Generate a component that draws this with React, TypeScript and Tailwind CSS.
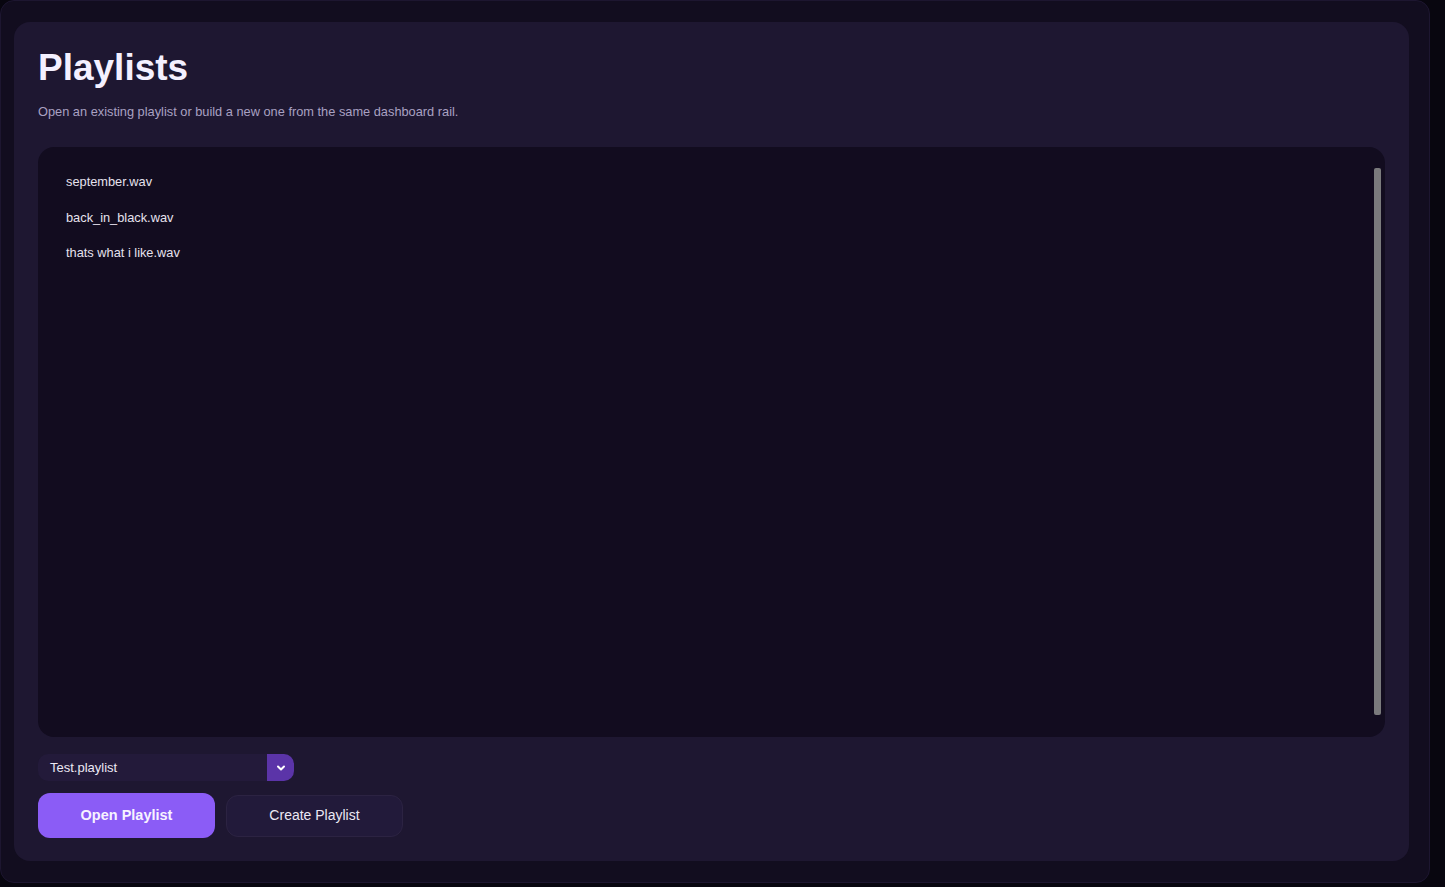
import React from "react";

export default function App() {
  const items = ["september.wav", "back_in_black.wav", "thats what i like.wav"];
  return (
    <div
      className="w-[1445px] h-[887px] bg-[#08060f] overflow-hidden"
      style={{ fontFamily: '"Liberation Sans", Arial, sans-serif' }}
    >
      <div className="w-[1430px] h-[883px] rounded-[14px] border border-[#1d1630] bg-[#120d1f] pt-[21px] pl-[13px] pr-[20px] pb-[21px]">
        <div className="h-full rounded-[16px] bg-[#1e1731] px-[24px] pt-[23px] pb-[22px] flex flex-col">
          <h1 className="text-[37px] leading-[46px] font-bold text-[#f4f0ff]">Playlists</h1>
          <p className="mt-[13px] text-[12.8px] leading-[16px] text-[#a9a1c2]">
            Open an existing playlist or build a new one from the same dashboard rail.
          </p>
          <div className="relative mt-[27px] h-[590px] rounded-[16px] bg-[#120c1f] pl-[28px] pt-[27px] flex flex-col gap-[19.5px]">
            {items.map((t) => (
              <div key={t} className="text-[12.8px] leading-[16px] text-[#e6e2ee]">
                {t}
              </div>
            ))}
            <div className="absolute right-[4px] top-[21px] bottom-[22px] w-[7px] rounded-[2px] bg-[#7a7a7c]" />
          </div>
          <div className="mt-[17px] flex w-[256px] h-[27px]">
            <div className="flex-1 rounded-l-[10px] bg-[#231a3a] pl-[12px] flex items-center text-[13px] text-[#ece8f4]">
              Test.playlist
            </div>
            <div className="w-[27px] rounded-r-[10px] bg-[#5b34a8] flex items-center justify-center">
              <svg width="10" height="8" viewBox="0 0 10 8" fill="none">
                <path d="M2 2.5 L5 5.5 L8 2.5" stroke="#ffffff" strokeWidth="2" strokeLinecap="round" strokeLinejoin="round" />
              </svg>
            </div>
          </div>
          <div className="mt-[12px] flex items-center gap-[11px]">
            <button className="w-[177px] h-[45px] rounded-[12px] bg-[#8b5cf6] text-[14.5px] font-bold text-[#f7f3ff]">
              Open Playlist
            </button>
            <button className="w-[177px] h-[42px] rounded-[12px] border border-[#2c2342] bg-[#221a3a] text-[14px] text-[#ece8f4]">
              Create Playlist
            </button>
          </div>
        </div>
      </div>
    </div>
  );
}
